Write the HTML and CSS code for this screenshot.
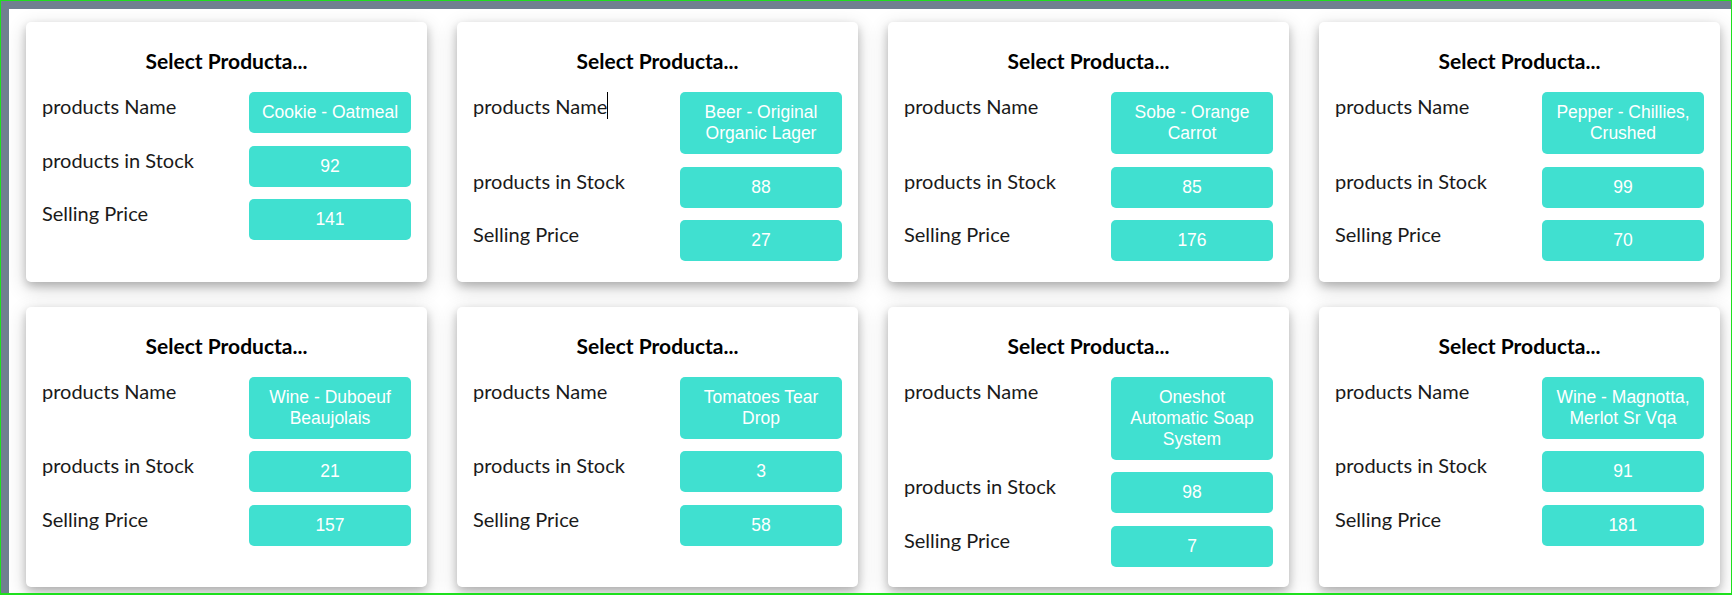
FILE: index.html
```html
<!DOCTYPE html>
<html>
<head>
<meta charset="utf-8">
<title>Products</title>
<link rel="stylesheet" href="styles.css">
</head>
<body>
<div class="frame">
  <main class="canvas">
    <section class="card">
      <h3 class="card-title">Select Producta...</h3>
      <div class="rows">
        <div class="label">products Name</div><div class="value">Cookie - Oatmeal</div>
        <div class="label">products in Stock</div><div class="value">92</div>
        <div class="label">Selling Price</div><div class="value">141</div>
      </div>
    </section>
    <section class="card">
      <h3 class="card-title">Select Producta...</h3>
      <div class="rows">
        <div class="label">products Name<span class="caret"></span></div><div class="value">Beer - Original Organic Lager</div>
        <div class="label">products in Stock</div><div class="value">88</div>
        <div class="label">Selling Price</div><div class="value">27</div>
      </div>
    </section>
    <section class="card">
      <h3 class="card-title">Select Producta...</h3>
      <div class="rows">
        <div class="label">products Name</div><div class="value">Sobe - Orange Carrot</div>
        <div class="label">products in Stock</div><div class="value">85</div>
        <div class="label">Selling Price</div><div class="value">176</div>
      </div>
    </section>
    <section class="card">
      <h3 class="card-title">Select Producta...</h3>
      <div class="rows">
        <div class="label">products Name</div><div class="value">Pepper - Chillies, Crushed</div>
        <div class="label">products in Stock</div><div class="value">99</div>
        <div class="label">Selling Price</div><div class="value">70</div>
      </div>
    </section>
    <section class="card">
      <h3 class="card-title">Select Producta...</h3>
      <div class="rows">
        <div class="label">products Name</div><div class="value">Wine - Duboeuf Beaujolais</div>
        <div class="label">products in Stock</div><div class="value">21</div>
        <div class="label">Selling Price</div><div class="value">157</div>
      </div>
    </section>
    <section class="card">
      <h3 class="card-title">Select Producta...</h3>
      <div class="rows">
        <div class="label">products Name</div><div class="value">Tomatoes Tear Drop</div>
        <div class="label">products in Stock</div><div class="value">3</div>
        <div class="label">Selling Price</div><div class="value">58</div>
      </div>
    </section>
    <section class="card">
      <h3 class="card-title">Select Producta...</h3>
      <div class="rows">
        <div class="label">products Name</div><div class="value">Oneshot Automatic Soap System</div>
        <div class="label">products in Stock</div><div class="value">98</div>
        <div class="label">Selling Price</div><div class="value">7</div>
      </div>
    </section>
    <section class="card">
      <h3 class="card-title">Select Producta...</h3>
      <div class="rows">
        <div class="label">products Name</div><div class="value">Wine - Magnotta, Merlot Sr Vqa</div>
        <div class="label">products in Stock</div><div class="value">91</div>
        <div class="label">Selling Price</div><div class="value">181</div>
      </div>
    </section>
  </main>
</div>
</body>
</html>
```
FILE: styles.css
```css
html, body {
  margin: 0;
  padding: 0;
  background: #ffffff;
}

.frame {
  width: 1732px;
  height: 595px;
  box-sizing: border-box;
  border: 1px solid #1ee01e;
  border-bottom-width: 2px;
  background: #708090;
  padding: 8px 0 0 8px;
  overflow: hidden;
}

.canvas {
  height: 100%;
  box-sizing: border-box;
  background: #ffffff;
  padding: 13px 0 0 17px;
  display: grid;
  grid-template-columns: repeat(4, 401px);
  column-gap: 30px;
  row-gap: 25px;
  align-content: start;
  font-family: "Lato", "Open Sans", sans-serif;
}

.card {
  background: #ffffff;
  border-radius: 5px;
  box-shadow: 0 4px 8px 0 rgba(0, 0, 0, 0.2), 0 6px 20px 0 rgba(0, 0, 0, 0.19);
  padding: 26px 16px 20.5px 16px;
}

.card-title {
  margin: 0 0 18px 0;
  font-family: "Lato", "Open Sans", sans-serif;
  font-size: 21px;
  font-weight: 700;
  line-height: 26px;
  text-align: center;
  color: #000000;
}

.rows {
  display: grid;
  grid-template-columns: 1fr 162px;
  row-gap: 12.5px;
  align-items: start;
}

.label {
  font-size: 20px;
  line-height: 29px;
  color: #1a1a1a;
  white-space: nowrap;
}

.caret {
  display: inline-block;
  width: 1px;
  height: 27px;
  background: #000000;
  vertical-align: top;
}

.value {
  background: #40e0d0;
  color: #ffffff;
  border-radius: 5px;
  padding: 10px 12px;
  font-family: "Liberation Sans", Arial, sans-serif;
  font-size: 17.5px;
  line-height: 21px;
  text-align: center;
}
```
